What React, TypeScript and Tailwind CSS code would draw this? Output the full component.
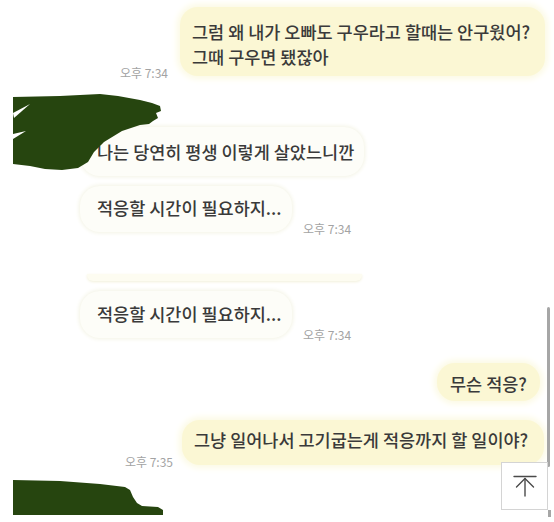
import React from "react";

const FONT = { fontFamily: '"Noto Sans CJK KR", "Noto Sans", sans-serif' };

function Time({ t }: { t: string }) {
  return (
    <span className="text-[12px] leading-[13px] text-[#a3a3a3] font-normal whitespace-nowrap mb-[-3px]">{t}</span>
  );
}

export default function App() {
  return (
    <div
      className="relative w-[554px] h-[522px] bg-white overflow-hidden text-[#3a3a3a] font-medium"
      style={FONT}
    >
      <div className="flex flex-col w-full">
        {/* Row 1 */}
        <div className="flex justify-end items-end gap-[12px] pr-[9px] pt-[7px]">
          <Time t="오후 7:34" />
          <div className="w-[365px] rounded-[18px] bg-[#fbf7d4] shadow-[0_0_6px_3px_#fcfae4] pl-[12px] pr-[8px] pt-[12px] pb-[7px] text-[17.5px] leading-[25px] whitespace-nowrap">
            그럼 왜 내가 오빠도 구우라고 할때는 안구웠어?
            <br />
            그때 구우면 됐잖아
          </div>
        </div>

        {/* Row 2 */}
        <div className="flex pl-[80px] mt-[51px]">
          <div className="w-[284px] rounded-[20px] bg-[#fdfdf8] shadow-[0_0_4px_1px_#f3f3e4] pl-[17px] pr-[8px] pt-[13px] pb-[12px] text-[17.5px] leading-[24px] whitespace-nowrap">
            나는 당연히 평생 이렇게 살았느니깐
          </div>
        </div>

        {/* Row 3 */}
        <div className="flex items-end gap-[11px] pl-[80px] mt-[10px]">
          <div className="w-[212px] rounded-[20px] bg-[#fdfdf8] shadow-[0_0_4px_1px_#f3f3e4] pl-[17px] pr-[6px] pt-[10px] pb-[12px] text-[17.5px] leading-[24px] whitespace-nowrap">
            적응할 시간이 필요하지...
          </div>
          <Time t="오후 7:34" />
        </div>

        {/* faint line */}
        <div className="ml-[87px] mt-[42px] w-[275px] h-[7px] rounded-b-[6px] bg-[#fdfcf1] shadow-[0_1px_3px_#f2f0da]" />

        {/* Row 4 */}
        <div className="flex items-end gap-[11px] pl-[80px] mt-[10px]">
          <div className="w-[212px] rounded-[20px] bg-[#fdfdf8] shadow-[0_0_4px_1px_#f3f3e4] pl-[17px] pr-[6px] pt-[11px] pb-[12px] text-[17.5px] leading-[24px] whitespace-nowrap">
            적응할 시간이 필요하지...
          </div>
          <Time t="오후 7:34" />
        </div>

        {/* Row 5 */}
        <div className="flex justify-end pr-[14px] mt-[25px]">
          <div className="w-[103px] rounded-[18px] bg-[#fbf7d4] shadow-[0_0_6px_3px_#fcfae4] pl-[13px] pt-[9px] pb-[5px] text-[17.5px] leading-[24px] whitespace-nowrap">
            무슨 적응?
          </div>
        </div>

        {/* Row 6 */}
        <div className="flex justify-end items-end gap-[9px] pr-[10px] mt-[19px]">
          <Time t="오후 7:35" />
          <div className="w-[362px] rounded-[18px] bg-[#fbf7d4] shadow-[0_0_6px_3px_#fcfae4] pl-[12px] pt-[8px] pb-[13px] text-[17.5px] leading-[24px] whitespace-nowrap">
            그냥 일어나서 고기굽는게 적응까지 할 일이야?
          </div>
        </div>
      </div>

      {/* redaction blobs */}
      <svg
        className="absolute left-0 top-0 pointer-events-none"
        width="554"
        height="522"
        viewBox="0 0 554 522"
      >
        <path
          d="M13,97 L60,96 L100,94 L118,96 L140,100 L152,103 L160,106 L161,111 L156,113 L158,118 L153,121 L149,124 L140,125 L122,131 L104,142 L94,152 L88,162 L78,168 L62,170 L45,169 L30,166 L13,164 Z"
          fill="#26450f"
        />
        <path d="M13,113 L30,104 L14,118 Z" fill="#ffffff" />
        <path d="M13,134 L26,131 L13,139 Z" fill="#ffffff" />
        <path
          d="M13,480 L60,481 L100,484 L125,487 L130,490 L133,497 L137,503 L142,506 L158,507 L163,510 L163,515 L13,515 Z"
          fill="#26450f"
        />
      </svg>

      {/* scrollbar */}
      <div className="absolute left-[547px] top-[307px] w-[3px] h-[160px] bg-[#a6a6a6] rounded-full" />
      <div className="absolute left-[548px] top-[510px] w-[3px] h-[7px] bg-[#a6a6a6]" />

      {/* scroll to top button */}
      <div className="absolute left-[501px] top-[462px] w-[47px] h-[48px] bg-white border border-[#d4d4d4] flex items-center justify-center">
        <svg width="24" height="22" viewBox="0 0 24 22" fill="none" stroke="#4a4a4a" strokeWidth="1.4" strokeLinecap="round" strokeLinejoin="round">
          <path d="M1 1.5 H23" />
          <path d="M3.5 12 L12 3.5 L20.5 12" />
          <path d="M12 3.5 V21" />
        </svg>
      </div>
    </div>
  );
}
